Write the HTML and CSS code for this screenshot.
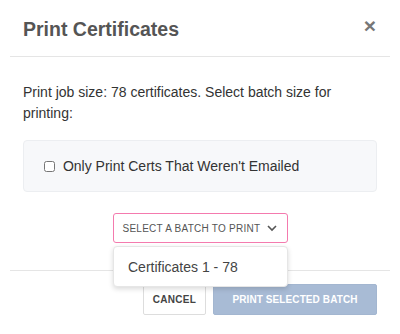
FILE: index.html
```
<!DOCTYPE html>
<html lang="en">
<head>
    <meta charset="UTF-8">
    <title>Print Certificates</title>
    <link rel="stylesheet" href="styles.css">
</head>
<body>
    <div class="modal">
        <div class="modal-header">
            <h2>Print Certificates</h2>
            <span class="close">&times;</span>
        </div>
        <div class="modal-body">
            <p>Print job size: 78 certificates. Select batch size for printing:</p>
            <div class="options">
                <label><input type="checkbox"> Only Print Certs That Weren't Emailed</label>
            </div>
            <div class="batch">
                <button class="batch-select"><span>Select a batch to print</span>
                    <svg width="12" height="8" viewBox="0 0 12 8"><path d="M2 2 L6 6 L10 2" fill="none" stroke="#555" stroke-width="1.6"/></svg>
                </button>
                <div class="batch-menu">
                    <div class="batch-item">Certificates 1 - 78</div>
                </div>
            </div>
        </div>
        <div class="modal-footer">
            <button class="btn cancel">Cancel</button>
            <button class="btn primary">Print Selected Batch</button>
        </div>
    </div>
</body>
</html>
```

FILE: styles.css
```
body{
    margin: 0;
    font-family: "Liberation Sans", Arial, sans-serif;
    color: #333;
}
.modal{
    margin: 0 10px;
}
.modal-header{
    height: 57px;
    box-sizing: border-box;
    border-bottom: 1px solid #e5e5e5;
    display: flex;
    align-items: center;
    justify-content: space-between;
    padding: 3px 14px 0 13px;
}
h2{
    margin: 0;
    font-size: 19.5px;
    font-weight: bold;
    color: #555;
}
.close{
    font-size: 21px;
    font-weight: bold;
    color: #777;
    line-height: 1;
    margin-top: -8px;
}
.modal-body{
    padding: 25px 13px 0;
}
.modal-body p{
    margin: 0;
    font-size: 14px;
    line-height: 21px;
}
.options{
    margin-top: 16px;
    height: 52px;
    box-sizing: border-box;
    background: #f7f8fa;
    border: 1px solid #eceef1;
    border-radius: 4px;
    display: flex;
    align-items: center;
    padding-left: 20px;
    font-size: 14px;
}
.options input{
    margin: 0 4px 0 0;
    width: 11px;
    height: 11px;
    vertical-align: -1px;
}
.batch{
    position: relative;
    display: flex;
    justify-content: center;
    margin-top: 21px;
}
.batch-select{
    width: 175px;
    height: 30px;
    background: #fff;
    border: 1.5px solid #f47aae;
    border-radius: 3px;
    font-family: inherit;
    font-size: 10px;
    letter-spacing: 0.25px;
    white-space: nowrap;
    text-transform: uppercase;
    color: #555;
    display: flex;
    align-items: center;
    justify-content: space-between;
    padding: 0 9px 0 9px;
}
.batch-select svg{
    flex-shrink: 0;
}
.batch-menu{
    position: absolute;
    top: 33px;
    left: 50%;
    margin-left: -87px;
    width: 175px;
    height: 41px;
    background: #fff;
    border: 1px solid #e6e6e6;
    border-radius: 4px;
    box-shadow: 0 2px 5px rgba(0,0,0,0.15);
    box-sizing: border-box;
    z-index: 2;
}
.batch-item{
    padding: 12px 0 0 14px;
    font-size: 14px;
    color: #444;
}
.modal-footer{
    margin-top: 27px;
    border-top: 1px solid #e5e5e5;
    display: flex;
    justify-content: flex-end;
    gap: 7px;
    padding: 13px 13px 0;
}
.btn{
    height: 31px;
    font-family: inherit;
    font-size: 10px;
    font-weight: bold;
    text-transform: uppercase;
    letter-spacing: 0.3px;
    border-radius: 2px;
}
.cancel{
    width: 63px;
    background: #fff;
    border: 1px solid #ddd;
    color: #444;
}
.primary{
    width: 164px;
    background: #a8bbd5;
    border: 1px solid #a3b6d0;
    color: #fff;
    letter-spacing: 0.1px;
}
```
